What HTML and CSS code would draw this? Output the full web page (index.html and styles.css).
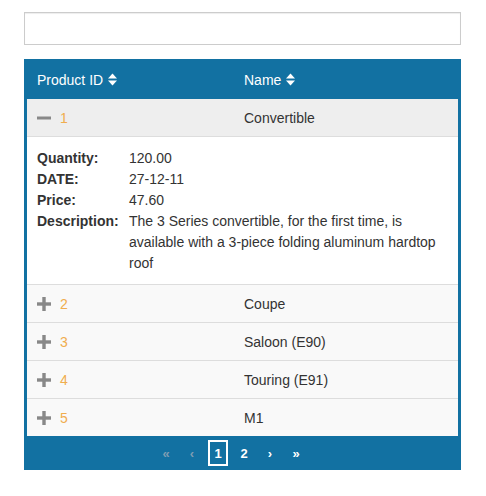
FILE: index.html
```html
<!DOCTYPE html>
<html>
<head>
<meta charset="utf-8">
<link rel="stylesheet" href="styles.css">
</head>
<body>
<div class="page">
  <input class="search" type="text">
  <div class="grid">
    <div class="head row">
      <div class="cell">Product ID<svg class="sort" width="9" height="13" viewBox="0 0 9 13"><polygon points="0,5.5 4.5,0.5 9,5.5" fill="#fff"/><polygon points="0,7.5 9,7.5 4.5,12.5" fill="#fff"/></svg></div>
      <div class="cell">Name<svg class="sort" width="9" height="13" viewBox="0 0 9 13"><polygon points="0,5.5 4.5,0.5 9,5.5" fill="#fff"/><polygon points="0,7.5 9,7.5 4.5,12.5" fill="#fff"/></svg></div>
    </div>
    <div class="body">
      <div class="row item open">
        <div class="cell id"><svg class="tog" width="14" height="14" viewBox="0 0 14 14"><rect x="0" y="5.5" width="14" height="3" fill="#888"/></svg><span class="num">1</span></div>
        <div class="cell">Convertible</div>
      </div>
      <div class="detail">
        <div class="dl">
          <div class="lbl">Quantity:</div><div>120.00</div>
          <div class="lbl">DATE:</div><div>27-12-11</div>
          <div class="lbl">Price:</div><div>47.60</div>
          <div class="lbl">Description:</div><div>The 3 Series convertible, for the first time, is available with a 3-piece folding aluminum hardtop roof</div>
        </div>
      </div>
      <div class="row item">
        <div class="cell id"><svg class="tog" width="14" height="14" viewBox="0 0 14 14"><rect x="0" y="5.3" width="14" height="3.4" fill="#888"/><rect x="5.3" y="0" width="3.4" height="14" fill="#888"/></svg><span class="num">2</span></div>
        <div class="cell">Coupe</div>
      </div>
      <div class="row item">
        <div class="cell id"><svg class="tog" width="14" height="14" viewBox="0 0 14 14"><rect x="0" y="5.3" width="14" height="3.4" fill="#888"/><rect x="5.3" y="0" width="3.4" height="14" fill="#888"/></svg><span class="num">3</span></div>
        <div class="cell">Saloon (E90)</div>
      </div>
      <div class="row item">
        <div class="cell id"><svg class="tog" width="14" height="14" viewBox="0 0 14 14"><rect x="0" y="5.3" width="14" height="3.4" fill="#888"/><rect x="5.3" y="0" width="3.4" height="14" fill="#888"/></svg><span class="num">4</span></div>
        <div class="cell">Touring (E91)</div>
      </div>
      <div class="row item last">
        <div class="cell id"><svg class="tog" width="14" height="14" viewBox="0 0 14 14"><rect x="0" y="5.3" width="14" height="3.4" fill="#888"/><rect x="5.3" y="0" width="3.4" height="14" fill="#888"/></svg><span class="num">5</span></div>
        <div class="cell">M1</div>
      </div>
    </div>
    <div class="pager">
      <span class="pg dis">«</span>
      <span class="pg dis">‹</span>
      <span class="pg active">1</span>
      <span class="pg">2</span>
      <span class="pg">›</span>
      <span class="pg">»</span>
    </div>
  </div>
</div>
</body>
</html>
```
FILE: styles.css
```css
html, body {
  margin: 0;
  padding: 0;
  background: #fff;
}
body {
  font-family: "Liberation Sans", Arial, sans-serif;
  font-size: 14px;
  color: #333;
}
.page {
  padding: 12px 25px 0 24px;
  width: 437px;
}
.search {
  display: block;
  box-sizing: border-box;
  width: 437px;
  height: 33px;
  margin: 0 0 14px 0;
  border: 1px solid #ccc;
  border-radius: 0;
  box-shadow: inset 0 1px 1px rgba(0,0,0,.075);
  padding: 6px 12px;
  font: inherit;
  outline: none;
}
.grid {
  background: #1271a2;
  padding: 0 3px;
}
.row {
  display: grid;
  grid-template-columns: 207px 1fr;
  align-items: center;
}
.cell {
  padding-left: 10px;
  padding-top: 1px;
  display: flex;
  align-items: center;
}
.head {
  height: 40px;
  color: #fff;
}
.sort {
  margin-left: 5px;
}
.body {
  background: #fff;
}
.item {
  height: 37px;
  background: #f9f9f9;
  border-bottom: 1px solid #ddd;
}
.item.open {
  background: #eee;
}
.item.last {
  border-bottom: none;
  height: 37px;
}
.tog {
  margin-right: 9px;
}
.num {
  color: #f0ad4e;
}
.detail {
  background: #fff;
  border-bottom: 1px solid #ddd;
  padding: 11px 10px 10px 10px;
}
.dl {
  display: grid;
  grid-template-columns: 92px 1fr;
  line-height: 21px;
}
.lbl {
  font-weight: bold;
}
.pager {
  height: 34px;
  display: flex;
  justify-content: center;
  align-items: center;
  padding-right: 23px;
  font-size: 13px;
  font-weight: bold;
  color: #fff;
}
.pg {
  box-sizing: border-box;
  width: 20px;
  height: 26px;
  margin: 0 3px;
  display: flex;
  align-items: center;
  justify-content: center;
}
.pg.dis {
  color: #7f9db2;
}
.pg.active {
  border: 2px solid #fff;
}
```
